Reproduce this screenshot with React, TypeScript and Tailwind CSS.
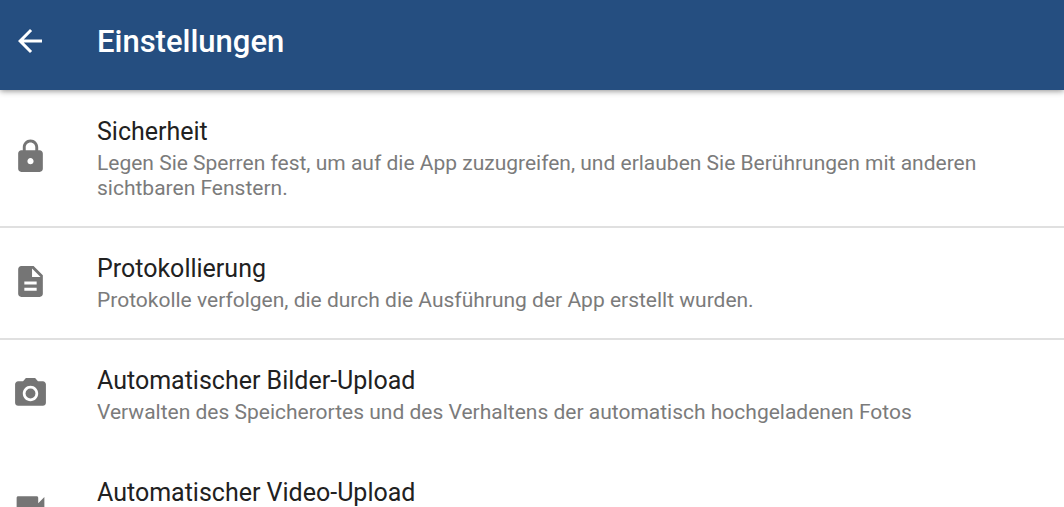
import { MdArrowBack, MdCameraAlt, MdDescription, MdLock, MdVideocam } from 'react-icons/md';
import type { IconType } from 'react-icons';

interface SettingsEntry {
  id: string;
  title: string;
  summary: string;
  icon: IconType;
  divider: boolean;
}

const entries: SettingsEntry[] = [
  {
    id: 'security',
    title: 'Sicherheit',
    summary:
      'Legen Sie Sperren fest, um auf die App zuzugreifen, und erlauben Sie Berührungen mit anderen sichtbaren Fenstern.',
    icon: MdLock,
    divider: true,
  },
  {
    id: 'logging',
    title: 'Protokollierung',
    summary: 'Protokolle verfolgen, die durch die Ausführung der App erstellt wurden.',
    icon: MdDescription,
    divider: true,
  },
  {
    id: 'pictures',
    title: 'Automatischer Bilder-Upload',
    summary: 'Verwalten des Speicherortes und des Verhaltens der automatisch hochgeladenen Fotos',
    icon: MdCameraAlt,
    divider: false,
  },
  {
    id: 'videos',
    title: 'Automatischer Video-Upload',
    summary: 'Verwalten des Speicherortes und des Verhaltens der automatisch hochgeladenen Videos',
    icon: MdVideocam,
    divider: false,
  },
];

function SettingsRow({ entry }: { entry: SettingsEntry }) {
  const Icon = entry.icon;

  return (
    <li className={entry.divider ? 'border-b-2 border-[#e0e0e0]' : 'border-b-2 border-transparent'}>
      <a href={`#${entry.id}`} className="flex items-center py-[25px] pr-16 pl-3">
        <Icon className="mr-12 mb-1 size-[37px] shrink-0 text-[#757575]" aria-hidden="true" />
        <span className="flex min-w-0 flex-col gap-[3px]">
          <span className="text-[25px] leading-8 text-[#212121]">{entry.title}</span>
          <span className="text-[21px] leading-[25px] text-[#7b7b7b]">{entry.summary}</span>
        </span>
      </a>
    </li>
  );
}

export default function App() {
  return (
    <div className="flex h-screen flex-col overflow-hidden bg-white font-['Roboto',sans-serif]">
      <header className="relative z-10 flex shrink-0 items-center bg-[#254e80] pt-[22px] pb-7 pl-3 shadow-[0_1px_6px_rgba(0,0,0,0.45)]">
        <button type="button" aria-label="Zurück" className="mr-[49px] pb-0.5 text-white">
          <MdArrowBack className="size-9" />
        </button>
        <h1 className="text-[31px] leading-10 font-medium text-white">Einstellungen</h1>
      </header>

      <ul className="min-h-0 flex-1 overflow-hidden pt-px">
        {entries.map((entry) => (
          <SettingsRow key={entry.id} entry={entry} />
        ))}
      </ul>
    </div>
  );
}
